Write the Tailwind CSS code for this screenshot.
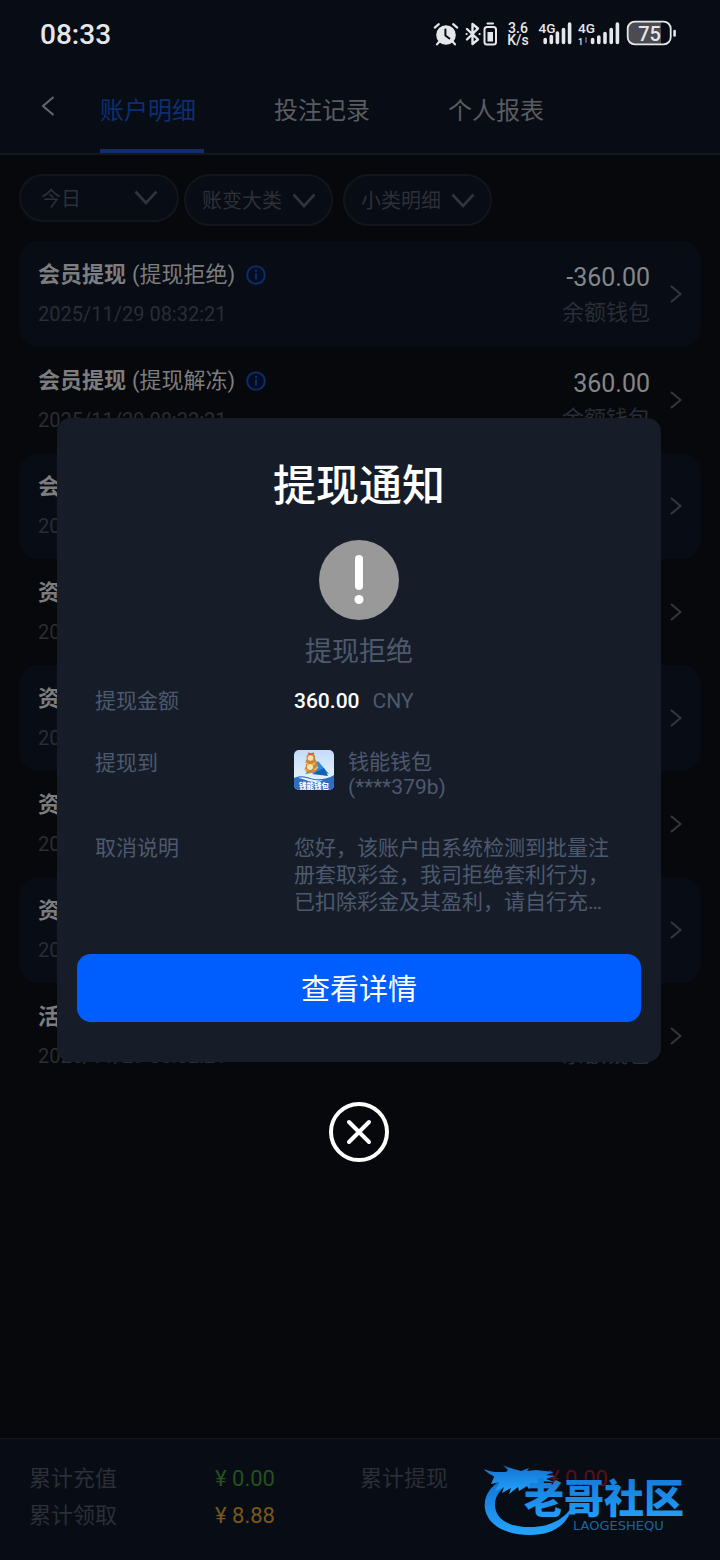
<!DOCTYPE html>
<html lang="zh-CN">
<head>
  <meta charset="UTF-8">
  <meta name="viewport" content="width=device-width, initial-scale=1.0">
  <title>账户明细</title>
  <script src="https://cdn.jsdelivr.net/npm/@tailwindcss/browser@4"></script>
</head>
<body class="relative min-h-screen flex flex-col bg-[#07080b] font-['Roboto','Noto_Sans_CJK_SC',sans-serif]">

  <!-- 状态栏 -->
  <div class="h-[70px] flex items-center justify-between pl-10 pr-[30px] bg-[#080c14] text-[#e6e7ea]">
    <span class="text-[28px] font-medium">08:33</span>
    <svg class="w-[270px] h-[50px]" viewBox="0 0 270 50" fill="none" stroke="#e6e7ea" stroke-linecap="round">
      <!-- 闹钟 -->
      <circle cx="26" cy="25" r="9.8" fill="#e6e7ea" stroke="none"/>
      <path d="M14.8 17.6l4-3.4M37.2 17.6l-4-3.4M19 32l-2 2.4M33 32l2 2.4" stroke-width="2.2"/>
      <path d="M25.4 19.5v6l4 3" stroke="#080c14" stroke-width="2" stroke-linejoin="round"/>
      <!-- 蓝牙 -->
      <path d="M47 19l11 10.5-5.5 4.5V14l5.5 4.5L47 29.5" stroke-width="2.4" stroke-linejoin="round"/>
      <path d="M46.5 24h.2M59.5 24h.2" stroke-width="2"/>
      <rect x="64.5" y="17" width="11.5" height="17.5" rx="2.5" stroke-width="2"/>
      <rect x="67.5" y="22" width="5.5" height="9.5" fill="#e6e7ea" stroke="none"/>
      <path d="M67.5 13.5h5.500" stroke-width="2"/>
      <g fill="#e6e7ea" stroke="none" class="font-medium">
        <text x="98" y="22.5" font-size="14" text-anchor="middle">3.6</text>
        <text x="98" y="35" font-size="14" text-anchor="middle">K/s</text>
        <text x="118.5" y="22.5" font-size="13.5">4G</text>
        <text x="158" y="22.5" font-size="13.5">4G</text>
        <text x="158" y="34.5" font-size="9">1</text>
      </g>
      <!-- 信号 -->
      <path d="M125.2 32.5v-3M131.3 32.5v-6M137.4 32.5v-9.5M143.5 32.5v-13M149.600 32.5v-18.5" stroke-width="3.6"/>
      <path d="M172.6 32.5v-3M178.8 32.5v-5.5M185 32.5v-9M191.2 32.5v-13M197.4 32.5v-18.5" stroke-width="3.6"/>
      <path d="M166 28v4" stroke="#5a5c61" stroke-width="2"/>
      <!-- 电池 -->
      <path d="M214 12h27v22h-27a6 6 0 0 1-6-6V18a6 6 0 0 1 6-6z" fill="#4a4c51" stroke="none"/>
      <rect x="207.7" y="11.7" width="43" height="22.6" rx="7" stroke-width="1.8"/>
      <path d="M254.6 21v4.5" stroke-width="2.6"/>
      <text x="229.5" y="30.5" font-size="20" text-anchor="middle" fill="#e6e7ea" stroke="none" class="font-medium">75</text>
    </svg>
  </div>

  <!-- 顶部标签 -->
  <nav class="h-[85px] flex bg-[#080c14] border-b-2 border-[#14171c] text-[24px] text-[#5a5c61]">
    <button class="w-[100px] pl-[41px] pb-3" aria-label="返回">
      <svg class="w-[14px] h-[22px]" viewBox="0 0 14 22" fill="none" stroke="#66686d" stroke-width="2"><path d="M12.5 2L2 11l10.5 9"/></svg>
    </button>
    <div class="flex gap-[70px]">
      <button class="w-[104px] pt-0.5 text-left border-b-4 border-[#0f2f6c] text-[#0c2f74]">账户明细</button>
      <button class="w-[104px] pt-0.5 text-left border-b-4 border-transparent">投注记录</button>
      <button class="w-[104px] pt-0.5 text-left border-b-4 border-transparent">个人报表</button>
    </div>
  </nav>

  <!-- 筛选 -->
  <div class="flex items-start pt-[19px] px-[19px] text-[20px] text-[#2c3038]">
    <div class="relative mr-[5px]">
      <select aria-label="日期" class="appearance-none w-[160px] h-12 pl-5 pt-0.5 rounded-full border-2 border-[#12161c] bg-[#080c14]"><option>今日</option></select>
      <svg class="absolute right-[21px] top-4 w-6 h-4 pointer-events-none" viewBox="0 0 24 16" fill="none" stroke="#30343c" stroke-width="2.600"><path d="M1.5 1.5L12 13 22.5 1.5"/></svg>
    </div>
    <div class="relative mr-[10px]">
      <select aria-label="账变大类" class="appearance-none w-[149px] h-[52px] pl-4 pt-0.5 rounded-full border-2 border-[#12161c] bg-[#080c14]"><option>账变大类</option></select>
      <svg class="absolute right-[17px] top-[19px] w-6 h-4 pointer-events-none" viewBox="0 0 24 16" fill="none" stroke="#30343c" stroke-width="2.600"><path d="M1.5 1.5L12 13 22.5 1.5"/></svg>
    </div>
    <div class="relative">
      <select aria-label="小类明细" class="appearance-none w-[149px] h-[52px] pl-4 pt-0.5 rounded-full border-2 border-[#12161c] bg-[#080c14]"><option>小类明细</option></select>
      <svg class="absolute right-[17px] top-[19px] w-6 h-4 pointer-events-none" viewBox="0 0 24 16" fill="none" stroke="#30343c" stroke-width="2.600"><path d="M1.5 1.5L12 13 22.5 1.5"/></svg>
    </div>
  </div>

  <!-- 账变列表 -->
  <ul id="lista" class="mt-[15px] px-[19px]"></ul>

  <!-- 合计 -->
  <footer class="relative mt-auto border-t border-[#12161f] bg-[#080c14] pt-[21px] pb-[26px] pl-[29px]">
    <div class="grid grid-cols-[186px_145px_188px_1fr] text-[22px] leading-[37px] text-[#2a2f38]">
      <span>累计充值</span><span class="text-[#24521d]">¥ 0.00</span>
      <span>累计提现</span><span class="text-[#5c0f18]">¥ 0.00</span>
      <span>累计领取</span><span class="text-[#79581b]">¥ 8.88</span>
    </div>
    <svg class="absolute right-[10px] top-[22px] w-[228px] h-[80px]" viewBox="0 0 228 80">
      <defs>
        <linearGradient id="agua" x1="0" y1="0" x2="0" y2="1">
          <stop offset="0" stop-color="#0f72d2"/>
          <stop offset="1" stop-color="#25a4fb"/>
        </linearGradient>
      </defs>
      <g fill="url(#agua)">
        <path d="M24 17C9 23 1 35 3 48c3 17 22 26 45 26 22 0 38-10 42-28-9 13-22 19-38 20-22 1-38-6-39-21-1-10 7-19 18-25z"/>
        <path d="M2 8c8 4 15 3 22 3l2-2-5-5c7 4 12 4 18 6l8-3-2 3 9-1 18 2-8 3 9 1-9 3 8 3-12-1 3 5-10-3-6 6-2-3-8 5-1-4-9 7 2-6-9 5 2-6-9 4 5-9-9 2 3-7C12 14 5 13 2 8z"/>
      </g>
      <text x="42" y="52" font-size="40" font-weight="900" fill="url(#agua)" class="font-['Noto_Sans_CJK_SC',sans-serif]">老哥社区</text>
      <text x="91" y="69" font-size="13" fill="#17689f" class="font-['DejaVu_Sans',sans-serif]">LAOGESHEQU</text>
    </svg>
  </footer>

  <!-- 提现通知弹窗 -->
  <div class="absolute inset-0 flex flex-col items-center justify-center pt-5 pl-[57px] pr-[59px]">
    <div role="dialog" aria-labelledby="titulo" class="w-full rounded-[14px] bg-[#161d28] pt-[38px] pb-10 px-5">
      <h1 id="titulo" class="text-center text-[43px] leading-[60px] font-medium text-white">提现通知</h1>
      <svg class="mt-6 mx-auto w-20 h-20" viewBox="0 0 80 80">
        <circle cx="40" cy="40" r="40" fill="#999"/>
        <rect x="36" y="15" width="8" height="35" rx="4" fill="#fff"/>
        <circle cx="40" cy="59.5" r="4.5" fill="#fff"/>
      </svg>
      <p class="mt-3 text-center text-[27px] leading-10 text-[#4d596e]">提现拒绝</p>

      <dl class="mt-4 pl-[18px] pr-[31px] grid grid-cols-[199px_1fr] gap-y-[35px] text-[21px] leading-[27px] text-[#4d596e]">
        <dt>提现金额</dt>
        <dd><span class="mr-[13px] font-medium text-white">360.00</span>CNY</dd>
        <dt>提现到</dt>
        <dd class="flex gap-[14px] leading-[25px]">
          <svg class="w-10 h-10" viewBox="0 0 40 40">
            <defs>
              <linearGradient id="ceu" x1="0" y1="0" x2="0" y2="1">
                <stop offset="0" stop-color="#c3dcfa"/>
                <stop offset="1" stop-color="#f3f8ff"/>
              </linearGradient>
            </defs>
            <rect width="40" height="40" rx="5" fill="url(#ceu)"/>
            <path d="M0 28c8-4 14 0 20 1s14 0 20-4v10a5 5 0 0 1-5 5H5a5 5 0 0 1-5-5z" fill="#2c6fc0"/>
            <path d="M11 24l13-13 11 13c-8-2-16-2-24 0z" fill="#2b8ade"/>
            <path d="M18 24l12-6 4 8z" fill="#1260b0"/>
            <path d="M13 9c-2-4 2-6 4-5 3-1 5 2 4 5 2 2 3 6 3 9-1 4-5 5-9 5-4-1-5-4-3-7 0-3-1-5 1-7z" fill="#c8893a"/>
            <circle cx="16.5" cy="8" r="2.8" fill="#f8dfae"/>
            <circle cx="16" cy="17" r="3" fill="#f7e3b4"/>
            <path d="M12 13l3 2M21 13l-3 2M13 21l-3-2M20 20l4-3" stroke="#f3c455" stroke-width="1.500"/>
            <path d="M14 3l3 1 3-1" stroke="#d9402d" stroke-width="1.200" fill="none"/>
            <path d="M4 28c9-2 15 4 25 2-10 5-17-1-25-2z" fill="#eaf4ff"/>
            <text x="20" y="38.5" font-size="7.5" font-weight="900" text-anchor="middle" fill="#fff" class="font-['Noto_Sans_CJK_SC',sans-serif]">钱能钱包</text>
          </svg>
          <span>钱能钱包<br>(****379b)</span>
        </dd>
        <dt>取消说明</dt>
        <dd>您好，该账户由系统检测到批量注册套取彩金，我司拒绝套利行为，已扣除彩金及其盈利，请自行充…</dd>
      </dl>

      <button class="mt-[38px] w-full h-[68px] pt-1.5 rounded-[14px] bg-[#005eff] text-white text-[29px]">查看详情</button>
    </div>

    <button class="mt-10" aria-label="关闭">
      <svg class="w-[60px] h-[60px]" viewBox="0 0 60 60" fill="none" stroke="#fff" stroke-width="4" stroke-linecap="round">
        <circle cx="30" cy="30" r="28"/>
        <path d="M20 20l20 20M40 20L20 40"/>
      </svg>
    </button>
  </div>

  <script>
    const registros = [
      { tipo: '会员提现', estado: '(提现拒绝)', valor: '-360.00' },
      { tipo: '会员提现', estado: '(提现解冻)', valor: '360.00' },
      { tipo: '会员提现', estado: '', valor: '-360.00' },
      { tipo: '资金切换', estado: '', valor: '360.00' },
      { tipo: '资金切换', estado: '', valor: '360.00' },
      { tipo: '资金切换', estado: '', valor: '360.00' },
      { tipo: '资金切换', estado: '', valor: '360.00' },
      { tipo: '活动礼金', estado: '', valor: '8.88' }
    ];

    const info = '<svg class="ml-[11px] w-5 h-5" viewBox="0 0 20 20" fill="#030d24" stroke="#0e2c66" stroke-width="2"><circle cx="10" cy="10" r="8.8"/><path d="M10 8.5v6M10 5v2"/></svg>';

    let html = '';
    registros.forEach(item => {
      html += `<li class="h-[106px] flex pt-[18px] pl-[19px] pr-[19px] rounded-[20px] odd:bg-[#080c14]">
        <div class="flex-1">
          <div class="flex items-center text-[22px] leading-8 text-[#7c7d7f]">
            <b class="mr-[6px]">${item.tipo}</b>${item.estado}${item.estado ? info : ''}
          </div>
          <div class="mt-2 text-[20px] leading-[30px] text-[#292d34]">2025/11/29 08:32:21</div>
        </div>
        <div class="pt-px text-right leading-[35px]">
          <div class="text-[25px] text-[#85868a]">${item.valor}</div>
          <div class="text-[22px] text-[#282e39]">余额钱包</div>
        </div>
        <svg class="ml-5 mt-[25px] w-3 h-5" viewBox="0 0 12 20" fill="none" stroke="#34373d" stroke-width="2"><path d="M1 2l9.5 8L1 18"/></svg>
      </li>`;
    });
    document.getElementById('lista').innerHTML = html;
  </script>
</body>
</html>
